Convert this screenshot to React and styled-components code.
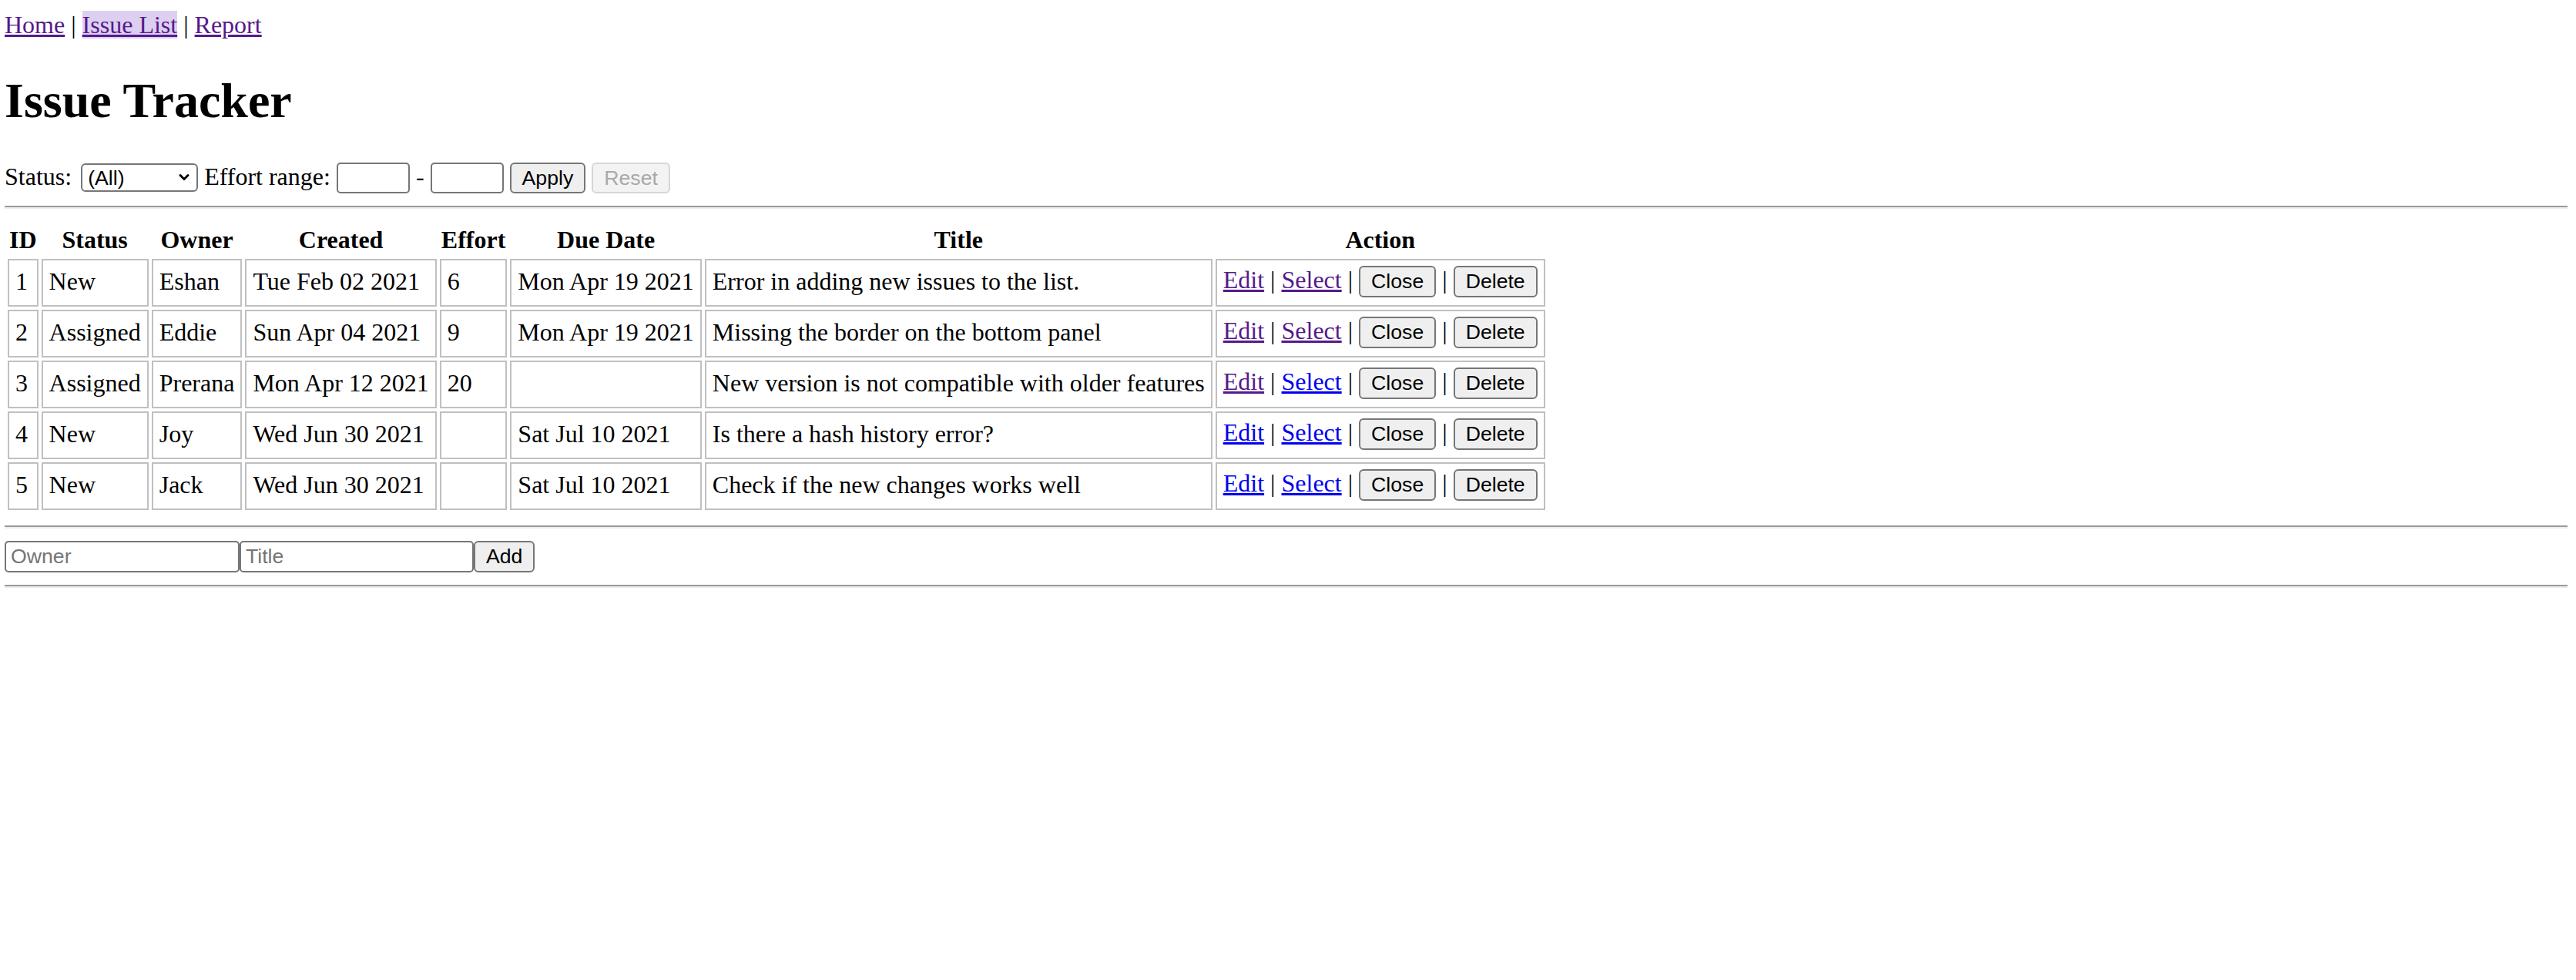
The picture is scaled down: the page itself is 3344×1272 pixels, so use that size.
import React from 'react';
import styled, { createGlobalStyle } from 'styled-components';
import { ChevronDown } from 'lucide-react';

const GlobalStyle = createGlobalStyle`
	html, body {
		margin: 0;
		background: #fff;
	}

	body {
		font-family: 'Liberation Serif', 'Times New Roman', serif;
		font-size: 32px;
		color: #000;
	}
`;

const Page = styled.div`
	padding: 14px 11px 0 6px;
`;

const Nav = styled.div`
	white-space: nowrap;
`;

const Link = styled.a`
	color: ${({ visited }) => (visited ? '#551a8b' : '#0000ee')};
	text-decoration: underline;
	cursor: pointer;
	background: ${({ active }) => (active ? '#dccff0' : 'transparent')};
`;

const Title = styled.h1`
	font-size: 64px;
	font-weight: bold;
	margin: 42.88px 0;
`;

const FilterBar = styled.div`
	white-space: nowrap;
`;

const SelectWrap = styled.span`
	position: relative;
	display: inline-block;
	vertical-align: baseline;
	margin-left: 4px;

	svg {
		position: absolute;
		right: 8px;
		top: 50%;
		transform: translateY(-50%);
		pointer-events: none;
	}
`;

const Select = styled.select`
	appearance: none;
	width: 152px;
	height: 37px;
	box-sizing: border-box;
	padding: 0 30px 0 7px;
	font-family: 'Liberation Sans', Arial, sans-serif;
	font-size: 26.67px;
	color: #000;
	background: #fff;
	border: 2px solid #767676;
	border-radius: 6px;
	margin: 0;
`;

const Input = styled.input`
	width: ${({ w }) => w}px;
	height: ${({ h }) => h || 40}px;
	box-sizing: border-box;
	padding: 0 6px;
	margin: 0;
	font-family: 'Liberation Sans', Arial, sans-serif;
	font-size: 26.67px;
	color: #000;
	background: #fff;
	border: 2px solid #767676;
	border-radius: 5px;

	&::placeholder {
		color: #757575;
	}
`;

const Button = styled.button`
	height: ${({ h }) => h || 40}px;
	box-sizing: border-box;
	padding: 0 14px;
	margin: 0;
	font-family: 'Liberation Sans', Arial, sans-serif;
	font-size: 26.67px;
	color: #000;
	background: #efefef;
	border: 2px solid #767676;
	border-radius: 6px;

	&:disabled {
		color: #a8a8a8;
		background: #f3f3f3;
		border-color: #d6d6d6;
	}
`;

const Rule = styled.hr`
	height: 0;
	margin: 16px 0;
	border: 0;
	border-top: 2px solid #9a9a9a;
	border-bottom: 2px solid #ececec;
`;

const Table = styled.table`
	border-collapse: separate;
	border-spacing: 4px;
	white-space: nowrap;
`;

const Th = styled.th`
	padding: 2px;
	font-weight: bold;
	text-align: center;
`;

const Td = styled.td`
	height: 42px;
	padding: 6px 8px 10px;
	border: 2px solid #c0c0c0;
	vertical-align: middle;
`;

const AddForm = styled.form`
	display: flex;
	align-items: center;
	margin: 0;
`;

const issues = [
	{ id: 1, status: 'New', owner: 'Eshan', created: 'Tue Feb 02 2021', effort: '6', due: 'Mon Apr 19 2021', title: 'Error in adding new issues to the list.', editSeen: true, selectSeen: true },
	{ id: 2, status: 'Assigned', owner: 'Eddie', created: 'Sun Apr 04 2021', effort: '9', due: 'Mon Apr 19 2021', title: 'Missing the border on the bottom panel', editSeen: true, selectSeen: true },
	{ id: 3, status: 'Assigned', owner: 'Prerana', created: 'Mon Apr 12 2021', effort: '20', due: '', title: 'New version is not compatible with older features', editSeen: true, selectSeen: false },
	{ id: 4, status: 'New', owner: 'Joy', created: 'Wed Jun 30 2021', effort: '', due: 'Sat Jul 10 2021', title: 'Is there a hash history error?', editSeen: false, selectSeen: false },
	{ id: 5, status: 'New', owner: 'Jack', created: 'Wed Jun 30 2021', effort: '', due: 'Sat Jul 10 2021', title: 'Check if the new changes works well', editSeen: false, selectSeen: false },
];

const IssueRow = ({ issue }) => (
	<tr>
		<Td>{issue.id}</Td>
		<Td>{issue.status}</Td>
		<Td>{issue.owner}</Td>
		<Td>{issue.created}</Td>
		<Td>{issue.effort}</Td>
		<Td>{issue.due}</Td>
		<Td>{issue.title}</Td>
		<Td>
			<Link visited={issue.editSeen}>Edit</Link>
			{' | '}
			<Link visited={issue.selectSeen}>Select</Link>
			{' | '}
			<Button h={41} type="button">Close</Button>
			{' | '}
			<Button h={41} type="button">Delete</Button>
		</Td>
	</tr>
);

export default () => (
	<Page>
		<GlobalStyle />
		<Nav>
			<Link visited>Home</Link>
			{' | '}
			<Link visited active>Issue List</Link>
			{' | '}
			<Link visited>Report</Link>
		</Nav>
		<Title>Issue Tracker</Title>
		<FilterBar>
			Status:{' '}
			<SelectWrap>
				<Select defaultValue="">
					<option value="">(All)</option>
					<option value="New">New</option>
					<option value="Assigned">Assigned</option>
					<option value="Fixed">Fixed</option>
					<option value="Closed">Closed</option>
				</Select>
				<ChevronDown size={20} strokeWidth={3.5} color="#000" />
			</SelectWrap>
			{' Effort range: '}
			<Input w={95} />
			{' - '}
			<Input w={95} />
			{' '}
			<Button type="button">Apply</Button>
			{' '}
			<Button type="button" disabled>Reset</Button>
		</FilterBar>
		<Rule />
		<Table>
			<thead>
				<tr>
					<Th>ID</Th>
					<Th>Status</Th>
					<Th>Owner</Th>
					<Th>Created</Th>
					<Th>Effort</Th>
					<Th>Due Date</Th>
					<Th>Title</Th>
					<Th>Action</Th>
				</tr>
			</thead>
			<tbody>
				{issues.map((issue) => (
					<IssueRow key={issue.id} issue={issue} />
				))}
			</tbody>
		</Table>
		<Rule />
		<AddForm>
			<Input w={305} h={41} placeholder="Owner" />
			<Input w={304} h={41} placeholder="Title" />
			<Button h={41} type="button">Add</Button>
		</AddForm>
		<Rule />
	</Page>
);
